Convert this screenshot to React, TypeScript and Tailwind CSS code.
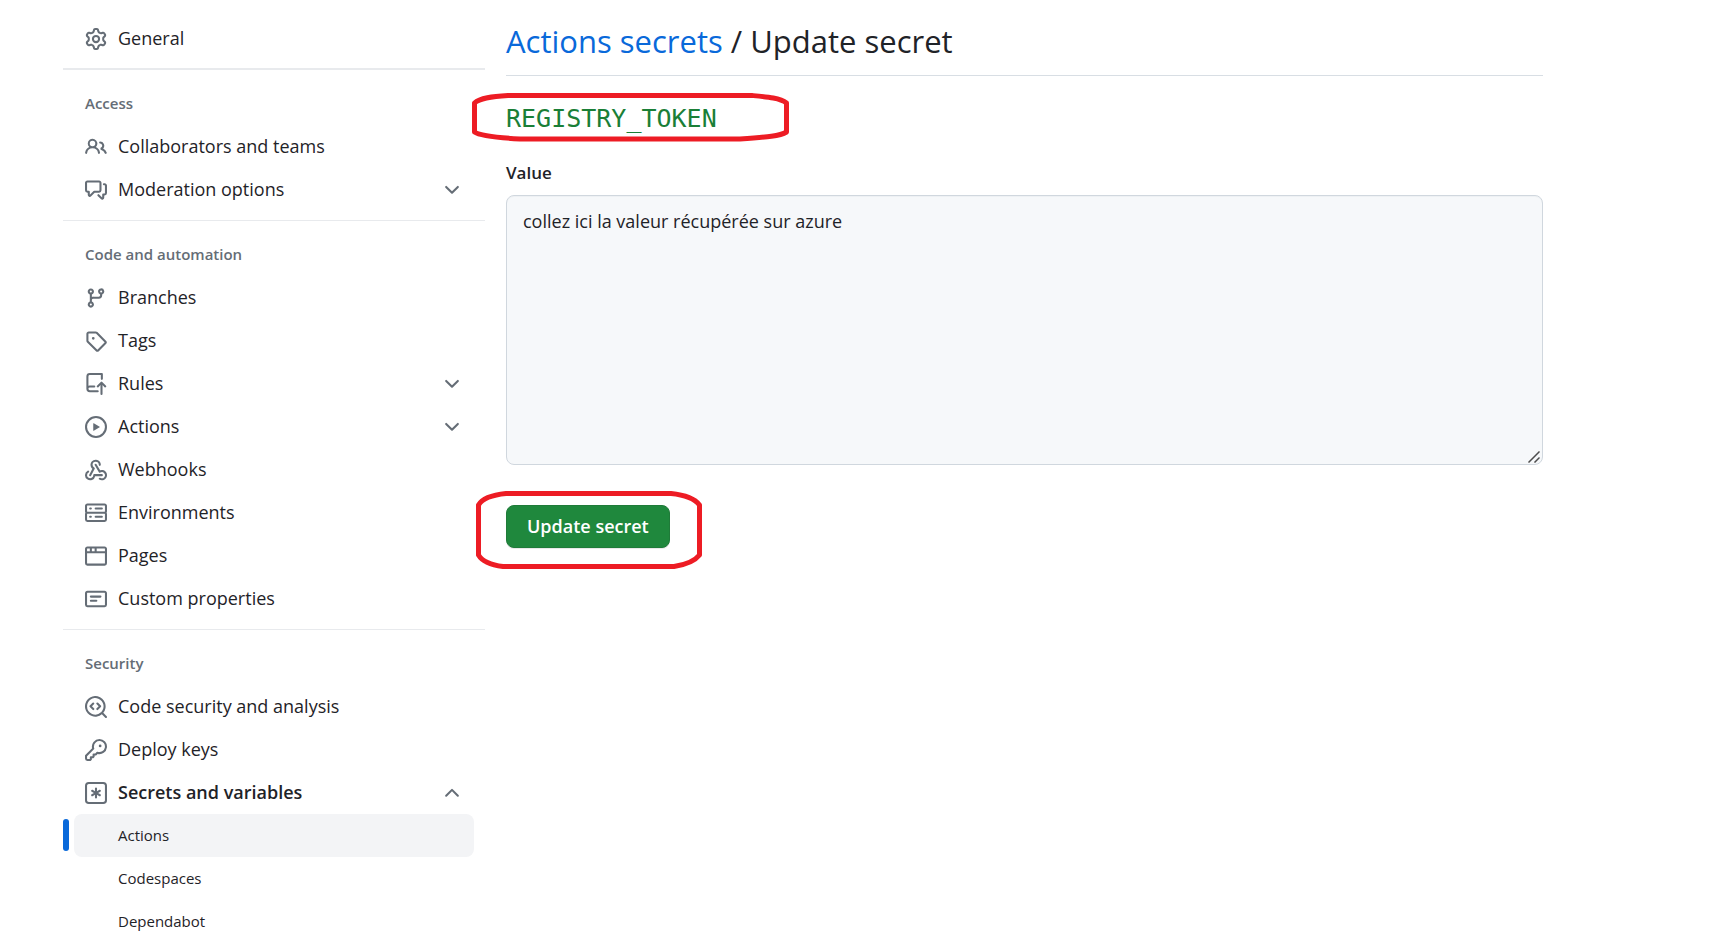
import { ReactNode } from "react";

const paths = {
  gear: "M8 0a8.2 8.2 0 0 1 .701.031C9.444.095 9.99.645 10.16 1.29l.288 1.107c.018.066.079.158.212.224.231.114.454.243.668.386.123.082.233.09.299.071l1.103-.303c.644-.176 1.392.021 1.82.63.27.385.506.792.704 1.218.315.675.111 1.422-.364 1.891l-.814.806c-.049.048-.098.147-.088.294.016.257.016.515 0 .772-.01.147.038.246.088.294l.814.806c.475.469.679 1.216.364 1.891a7.977 7.977 0 0 1-.704 1.217c-.428.61-1.176.807-1.82.63l-1.102-.302c-.067-.019-.177-.011-.3.071a5.909 5.909 0 0 1-.668.386c-.133.066-.194.158-.211.224l-.29 1.106c-.168.646-.715 1.196-1.458 1.26a8.006 8.006 0 0 1-1.402 0c-.743-.064-1.289-.614-1.458-1.26l-.289-1.106c-.018-.066-.079-.158-.212-.224a5.738 5.738 0 0 1-.668-.386c-.123-.082-.233-.09-.299-.071l-1.103.303c-.644.176-1.392-.021-1.82-.63a8.12 8.12 0 0 1-.704-1.218c-.315-.675-.111-1.422.363-1.891l.815-.806c.05-.048.098-.147.088-.294a6.214 6.214 0 0 1 0-.772c.01-.147-.038-.246-.088-.294l-.815-.806C.635 6.045.431 5.298.746 4.623a7.92 7.92 0 0 1 .704-1.217c.428-.61 1.176-.807 1.82-.63l1.102.302c.067.019.177.011.3-.071.214-.143.437-.272.668-.386.133-.066.194-.158.211-.224l.29-1.106C6.009.645 6.556.095 7.299.03 7.53.01 7.764 0 8 0Zm-.571 1.525c-.036.003-.108.036-.137.146l-.289 1.105c-.147.561-.549.967-.998 1.189-.173.086-.34.183-.5.29-.417.278-.97.423-1.529.27l-1.103-.303c-.109-.03-.175.016-.195.045-.22.312-.412.644-.573.99-.014.031-.021.11.059.19l.815.806c.411.406.562.957.53 1.456a4.709 4.709 0 0 0 0 .582c.032.499-.119 1.05-.53 1.456l-.815.806c-.081.08-.073.159-.059.19.162.346.353.677.573.989.02.03.085.076.195.046l1.102-.303c.56-.153 1.113-.008 1.53.27.161.107.328.204.501.29.447.222.85.629.997 1.189l.289 1.105c.029.109.101.143.137.146a6.6 6.6 0 0 0 1.142 0c.036-.003.108-.036.137-.146l.289-1.105c.147-.561.549-.967.998-1.189.173-.086.34-.183.5-.29.417-.278.97-.423 1.529-.27l1.103.303c.109.029.175-.016.195-.045.22-.313.411-.644.573-.99.014-.031.021-.11-.059-.19l-.815-.806c-.411-.406-.562-.957-.53-1.456a4.709 4.709 0 0 0 0-.582c-.032-.499.119-1.05.53-1.456l.815-.806c.081-.08.073-.159.059-.19a6.464 6.464 0 0 0-.573-.989c-.02-.03-.085-.076-.195-.046l-1.102.303c-.56.153-1.113.008-1.53-.27a4.44 4.44 0 0 0-.501-.29c-.447-.222-.85-.629-.997-1.189l-.289-1.105c-.029-.11-.101-.143-.137-.146a6.6 6.6 0 0 0-1.142 0ZM11 8a3 3 0 1 1-6 0 3 3 0 0 1 6 0ZM9.5 8a1.5 1.5 0 1 0-3.001.001A1.5 1.5 0 0 0 9.5 8Z",
  people: "M2 5.5a3.5 3.5 0 1 1 5.898 2.549 5.508 5.508 0 0 1 3.034 4.084.75.75 0 1 1-1.482.235 4 4 0 0 0-7.9 0 .75.75 0 0 1-1.482-.236A5.507 5.507 0 0 1 3.102 8.05 3.493 3.493 0 0 1 2 5.5ZM11 4a3.001 3.001 0 0 1 2.22 5.018 5.01 5.01 0 0 1 2.56 3.012.749.749 0 0 1-.885.954.752.752 0 0 1-.549-.514 3.507 3.507 0 0 0-2.522-2.372.75.75 0 0 1-.574-.73v-.352a.75.75 0 0 1 .416-.672A1.5 1.5 0 0 0 11 5.5.75.75 0 0 1 11 4Zm-5.5-.5a2 2 0 1 0-.001 3.999A2 2 0 0 0 5.5 3.5Z",
  discussion: "M1.75 1h8.5c.966 0 1.75.784 1.75 1.75v5.5A1.75 1.75 0 0 1 10.25 10H7.061l-2.574 2.573A1.458 1.458 0 0 1 2 11.543V10h-.25A1.75 1.75 0 0 1 0 8.25v-5.5C0 1.784.784 1 1.75 1ZM1.5 2.75v5.5c0 .138.112.25.25.25h1a.75.75 0 0 1 .75.75v2.19l2.72-2.72a.749.749 0 0 1 .53-.22h3.5a.25.25 0 0 0 .25-.25v-5.5a.25.25 0 0 0-.25-.25h-8.5a.25.25 0 0 0-.25.25Zm13 2a.25.25 0 0 0-.25-.25h-.5a.75.75 0 0 1 0-1.5h.5c.966 0 1.75.784 1.75 1.75v5.5A1.75 1.75 0 0 1 14.25 12H14v1.543a1.458 1.458 0 0 1-2.487 1.03L9.22 12.28a.749.749 0 0 1 .326-1.275.749.749 0 0 1 .734.215l2.22 2.22v-2.19a.75.75 0 0 1 .75-.75h1a.25.25 0 0 0 .25-.25Z",
  branch: "M9.5 3.25a2.25 2.25 0 1 1 3 2.122V6A2.5 2.5 0 0 1 10 8.5H6a1 1 0 0 0-1 1v1.128a2.251 2.251 0 1 1-1.5 0V5.372a2.25 2.25 0 1 1 1.5 0v1.836A2.493 2.493 0 0 1 6 7h4a1 1 0 0 0 1-1v-.628A2.25 2.25 0 0 1 9.5 3.25Zm-6 0a.75.75 0 1 0 1.5 0 .75.75 0 0 0-1.5 0Zm8.25-.75a.75.75 0 1 0 0 1.5.75.75 0 0 0 0-1.5ZM4.25 12a.75.75 0 1 0 0 1.5.75.75 0 0 0 0-1.5Z",
  tag: "M1 7.775V2.75C1 1.784 1.784 1 2.75 1h5.025c.464 0 .91.184 1.238.513l6.25 6.25a1.75 1.75 0 0 1 0 2.474l-5.026 5.026a1.75 1.75 0 0 1-2.474 0l-6.25-6.25A1.752 1.752 0 0 1 1 7.775Zm1.5 0c0 .066.026.13.073.177l6.25 6.25a.25.25 0 0 0 .354 0l5.025-5.025a.25.25 0 0 0 0-.354l-6.25-6.25a.25.25 0 0 0-.177-.073H2.75a.25.25 0 0 0-.25.25ZM6 5a1 1 0 1 1 0 2 1 1 0 0 1 0-2Z",
  repoPush: "M1 2.5A2.5 2.5 0 0 1 3.5 0h8.75a.75.75 0 0 1 .75.75v3.5a.75.75 0 0 1-1.5 0V1.5h-8a1 1 0 0 0-1 1v6.708A2.493 2.493 0 0 1 3.5 9h3.25a.75.75 0 0 1 0 1.5H3.5a1 1 0 0 0 0 2h5.75a.75.75 0 0 1 0 1.5H3.5A2.5 2.5 0 0 1 1 11.5Zm13.23 7.79-1.48-1.48v6.44a.75.75 0 0 1-1.5 0V8.81l-1.48 1.48a.75.75 0 0 1-1.06-1.06l2.76-2.76a.75.75 0 0 1 1.06 0l2.76 2.76a.75.75 0 0 1-1.06 1.06Z",
  play: "M8 0a8 8 0 1 1 0 16A8 8 0 0 1 8 0ZM1.5 8a6.5 6.5 0 1 0 13 0 6.5 6.5 0 0 0-13 0Zm4.879-2.773 4.264 2.559a.25.25 0 0 1 0 .428l-4.264 2.559A.25.25 0 0 1 6 10.559V5.442a.25.25 0 0 1 .379-.215Z",
  webhook: "M5.5 4.25a2.25 2.25 0 0 1 4.5 0 .75.75 0 0 0 1.5 0 3.75 3.75 0 1 0-6.14 2.889l-2.272 4.258a.75.75 0 0 0 1.324.706L7 7.25a.75.75 0 0 0-.309-1.015A2.25 2.25 0 0 1 5.5 4.25Z M7.364 3.607a.75.75 0 0 1 1.03.257l2.608 4.349a3.75 3.75 0 1 1-.628 6.785.75.75 0 0 1 .752-1.299 2.25 2.25 0 1 0-.033-3.88.75.75 0 0 1-1.03-.256L7.107 4.636a.75.75 0 0 1 .257-1.03Z M2.9 8.776A.75.75 0 0 1 2.625 9.8 2.25 2.25 0 1 0 6 11.75a.75.75 0 0 1 .75-.751h5.5a.75.75 0 0 1 0 1.5H7.425a3.751 3.751 0 1 1-5.55-3.998.75.75 0 0 1 1.024.274Z",
  server: "M1.75 1h12.5c.966 0 1.75.784 1.75 1.75v4c0 .372-.116.717-.314 1 .198.283.314.628.314 1v4a1.75 1.75 0 0 1-1.75 1.75H1.75A1.75 1.75 0 0 1 0 12.75v-4c0-.358.109-.707.314-1a1.739 1.739 0 0 1-.314-1v-4C0 1.784.784 1 1.75 1ZM1.5 2.75v4c0 .138.112.25.25.25h12.5a.25.25 0 0 0 .25-.25v-4a.25.25 0 0 0-.25-.25H1.75a.25.25 0 0 0-.25.25Zm.25 5.75a.25.25 0 0 0-.25.25v4c0 .138.112.25.25.25h12.5a.25.25 0 0 0 .25-.25v-4a.25.25 0 0 0-.25-.25ZM7 4.75A.75.75 0 0 1 7.75 4h4.5a.75.75 0 0 1 0 1.5h-4.5A.75.75 0 0 1 7 4.75ZM7.75 10h4.5a.75.75 0 0 1 0 1.5h-4.5a.75.75 0 0 1 0-1.5ZM3 4.75A.75.75 0 0 1 3.75 4h.5a.75.75 0 0 1 0 1.5h-.5A.75.75 0 0 1 3 4.75ZM3.75 10h.5a.75.75 0 0 1 0 1.5h-.5a.75.75 0 0 1 0-1.5Z",
  browser: "M0 2.75C0 1.784.784 1 1.75 1h12.5c.966 0 1.75.784 1.75 1.75v10.5A1.75 1.75 0 0 1 14.25 15H1.75A1.75 1.75 0 0 1 0 13.25ZM14.5 6h-13v7.25c0 .138.112.25.25.25h12.5a.25.25 0 0 0 .25-.25Zm-6-3.5v2h6V2.75a.25.25 0 0 0-.25-.25ZM5 2.5v2h2v-2Zm-3.25 0a.25.25 0 0 0-.25.25V4.5h2v-2Z",
  note: "M0 3.75C0 2.784.784 2 1.75 2h12.5c.966 0 1.75.784 1.75 1.75v8.5A1.75 1.75 0 0 1 14.25 14H1.75A1.75 1.75 0 0 1 0 12.25Zm1.75-.25a.25.25 0 0 0-.25.25v8.5c0 .138.112.25.25.25h12.5a.25.25 0 0 0 .25-.25v-8.5a.25.25 0 0 0-.25-.25ZM3.5 6.25a.75.75 0 0 1 .75-.75h7a.75.75 0 0 1 0 1.5h-7a.75.75 0 0 1-.75-.75Zm.75 2.25h4a.75.75 0 0 1 0 1.5h-4a.75.75 0 0 1 0-1.5Z",
  codescan: "M8.47 4.97a.75.75 0 0 0 0 1.06L9.94 7.5 8.47 8.97a.75.75 0 1 0 1.06 1.06l2-2a.75.75 0 0 0 0-1.06l-2-2a.75.75 0 0 0-1.06 0ZM6.53 6.03a.75.75 0 0 0-1.06-1.06l-2 2a.75.75 0 0 0 0 1.06l2 2a.75.75 0 1 0 1.06-1.06L5.06 7.5l1.47-1.47Z M12.246 13.307a7.501 7.501 0 1 1 1.06-1.06l2.474 2.473a.749.749 0 0 1-.326 1.275.749.749 0 0 1-.734-.215ZM1.5 7.5a6.002 6.002 0 0 0 3.608 5.504 6.002 6.002 0 0 0 6.486-1.117.748.748 0 0 1 .292-.293A6 6 0 1 0 1.5 7.5Z",
  key: "M10.5 0a5.499 5.499 0 1 1-1.288 10.848l-.932.932a.749.749 0 0 1-.53.22H7v.75a.749.749 0 0 1-.22.53l-.5.5a.749.749 0 0 1-.53.22H5v.75a.749.749 0 0 1-.22.53l-.5.5a.749.749 0 0 1-.53.22h-2A1.75 1.75 0 0 1 0 14.25v-2c0-.199.079-.389.22-.53l4.932-4.932A5.5 5.5 0 0 1 10.5 0Zm-4 5.5c-.001.431.069.86.205 1.269a.75.75 0 0 1-.181.768L1.5 12.56v1.69c0 .138.112.25.25.25h1.69l.06-.06v-1.19a.75.75 0 0 1 .75-.75h1.19l.06-.06v-1.19a.75.75 0 0 1 .75-.75h1.19l1.023-1.025a.75.75 0 0 1 .768-.18A4 4 0 1 0 6.5 5.5ZM11 6a1 1 0 1 1 0-2 1 1 0 0 1 0 2Z",
  asterisk: "M0 2.75A2.75 2.75 0 0 1 2.75 0h10.5A2.75 2.75 0 0 1 16 2.75v10.5A2.75 2.75 0 0 1 13.25 16H2.75A2.75 2.75 0 0 1 0 13.25ZM2.75 1.5c-.69 0-1.25.56-1.25 1.25v10.5c0 .69.56 1.25 1.25 1.25h10.5c.69 0 1.25-.56 1.25-1.25V2.75c0-.69-.56-1.25-1.25-1.25Z M8 4a.75.75 0 0 1 .75.75V6.7l1.69-.975a.75.75 0 0 1 .75 1.3L9.5 8l1.69.976a.75.75 0 0 1-.75 1.298L8.75 9.3v1.951a.75.75 0 0 1-1.5 0V9.299l-1.69.976a.75.75 0 0 1-.75-1.3L6.5 8l-1.69-.975a.75.75 0 0 1 .75-1.3l1.69.976V4.75A.75.75 0 0 1 8 4Z",
  chevronDown: "M12.78 5.22a.749.749 0 0 1 0 1.06l-4.25 4.25a.749.749 0 0 1-1.06 0L3.22 6.28a.749.749 0 1 1 1.06-1.06L8 8.939l3.72-3.719a.749.749 0 0 1 1.06 0Z",
  chevronUp: "M3.22 10.53a.749.749 0 0 1 0-1.06l4.25-4.25a.749.749 0 0 1 1.06 0l4.25 4.25a.749.749 0 1 1-1.06 1.06L8 6.811 4.28 10.53a.749.749 0 0 1-1.06 0Z",
};

type IconName = keyof typeof paths;

function Icon({ name }: { name: IconName }) {
  return (
    <svg viewBox="0 0 16 16" className="size-[22px] shrink-0 fill-[#656d76]" aria-hidden="true">
      <path d={paths[name]} fillRule={name === "webhook" ? "nonzero" : "evenodd"} />
    </svg>
  );
}

const rowClass = "flex h-[43px] w-full items-center gap-[11px] rounded-lg px-[11px] text-left text-[18px]";

function NavLink({ icon, label }: { icon: IconName; label: string }) {
  return (
    <li>
      <a href="#" className={rowClass}>
        <Icon name={icon} />
        <span>{label}</span>
      </a>
    </li>
  );
}

function NavToggle({ icon, label, open, children }: { icon: IconName; label: string; open?: boolean; children?: ReactNode }) {
  return (
    <li>
      <button type="button" aria-expanded={!!open} className={rowClass}>
        <Icon name={icon} />
        <span className={open ? "flex-1 font-semibold" : "flex-1"}>{label}</span>
        <Icon name={open ? "chevronUp" : "chevronDown"} />
      </button>
      {children}
    </li>
  );
}

function SubLink({ label, current }: { label: string; current?: boolean }) {
  return (
    <li className="relative">
      {current && <span className="absolute top-[5px] -left-[11px] h-8 w-1.5 rounded-md bg-[#0969da]" />}
      <a
        href="#"
        aria-current={current ? "page" : undefined}
        className={
          current
            ? "flex h-[43px] items-center rounded-lg bg-[#f3f4f6] pl-11 text-[15px]"
            : "flex h-[43px] items-center rounded-lg pl-11 text-[15px]"
        }
      >
        {label}
      </a>
    </li>
  );
}

function Group({ title, children }: { title: string; children: ReactNode }) {
  return (
    <section className="border-t border-[#e8eaed] pb-[9px] last:pb-0">
      <h3 className="flex h-[55px] items-center px-[22px] pt-[11px] text-[15px] font-semibold text-[#656d76]">{title}</h3>
      <ul className="px-[11px]">{children}</ul>
    </section>
  );
}

export default function App() {
  return (
    <div className="flex min-h-screen gap-[21px] bg-white pr-[183px] pl-[63px] font-['Open_Sans','Noto_Sans',sans-serif] text-[#1f2328]">
      <nav aria-label="Settings" className="w-[422px] shrink-0 pt-[17px]">
        <ul className="border-b border-[#e8eaed] px-[11px] pb-2">
          <NavLink icon="gear" label="General" />
        </ul>
        <Group title="Access">
          <NavLink icon="people" label="Collaborators and teams" />
          <NavToggle icon="discussion" label="Moderation options" />
        </Group>
        <Group title="Code and automation">
          <NavLink icon="branch" label="Branches" />
          <NavLink icon="tag" label="Tags" />
          <NavToggle icon="repoPush" label="Rules" />
          <NavToggle icon="play" label="Actions" />
          <NavLink icon="webhook" label="Webhooks" />
          <NavLink icon="server" label="Environments" />
          <NavLink icon="browser" label="Pages" />
          <NavLink icon="note" label="Custom properties" />
        </Group>
        <Group title="Security">
          <NavLink icon="codescan" label="Code security and analysis" />
          <NavLink icon="key" label="Deploy keys" />
          <NavToggle icon="asterisk" label="Secrets and variables" open>
            <ul>
              <SubLink label="Actions" current />
              <SubLink label="Codespaces" />
              <SubLink label="Dependabot" />
            </ul>
          </NavToggle>
        </Group>
      </nav>

      <main className="min-w-0 flex-1 pt-[19px]">
        <h2 className="border-b border-[#d8dee4] pb-3 text-[31px] leading-[44px]">
          <a href="#" className="text-[#0969da]">Actions secrets</a> / Update secret
        </h2>
        <form onSubmit={(e) => e.preventDefault()}>
          <div className="relative mt-[23px] flex h-10 items-center">
            <code className="font-['DejaVu_Sans_Mono',monospace] text-[25px] text-[#1a7f37]">REGISTRY_TOKEN</code>
            <svg className="pointer-events-none absolute -top-[6px] -left-[34px] h-[49px] w-[317px]" viewBox="0 0 317 49" aria-hidden="true">
              <path
                d="M36 2.500H280C296 4 308 5 314.500 10V39C308 43 296 44 268 46H48C30 45 8 43 2.500 39V10C8 5 20 3.500 36 2.500Z"
                fill="none" stroke="#ed1c24" strokeWidth="5" strokeLinejoin="round"
              />
            </svg>
          </div>
          <label htmlFor="secret-value" className="mt-5 block text-[17px] leading-7 font-semibold">Value</label>
          <div className="relative mt-2">
            <textarea
              id="secret-value"
              defaultValue="collez ici la valeur récupérée sur azure"
              spellCheck={false}
              className="block h-[270px] w-full resize-y rounded-lg border border-[#d0d7de] bg-[#f6f8fa] px-4 py-[11px] text-[18px] leading-7 shadow-[inset_0_1px_0_rgba(208,215,222,0.2)] [&::-webkit-resizer]:bg-transparent"
            />
            <svg className="pointer-events-none absolute right-[3px] bottom-[2px] size-3" viewBox="0 0 12 12" aria-hidden="true">
              <path d="M1 11 11 1M7 11l4-4" fill="none" stroke="#4d4d4d" strokeWidth="1.5" strokeLinecap="square" />
            </svg>
          </div>
          <div className="relative mt-10 w-fit">
            <button
              type="submit"
              className="h-[43px] rounded-lg border border-[#1f7b39] bg-[#1f883d] px-5 text-[18px] font-semibold text-white shadow-[0_1px_0_rgba(31,35,40,0.1)]"
            >
              Update secret
            </button>
            <svg className="pointer-events-none absolute -top-[14px] -left-[30px] h-[78px] w-[226px]" viewBox="0 0 226 78" aria-hidden="true">
              <path
                d="M30 2.500H195C210 4 219 8 223.500 14V64C218 71 208 74 198 75.500H27C15 74 6 70 2.500 64V14C6 8 15 4 30 2.500Z"
                fill="none" stroke="#ed1c24" strokeWidth="5" strokeLinejoin="round"
              />
            </svg>
          </div>
        </form>
      </main>
    </div>
  );
}
